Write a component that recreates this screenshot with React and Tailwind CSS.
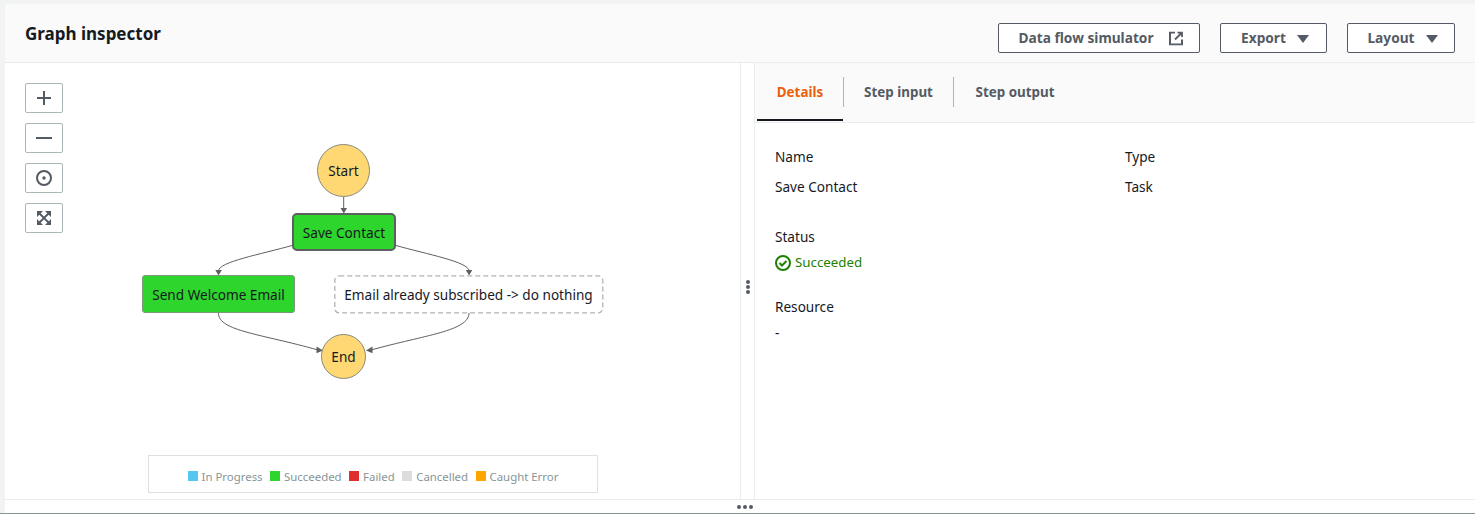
const font = 'font-["Noto_Sans",sans-serif]';

function ToolButton({ children }) {
  return (
    <button className="flex h-[30px] w-[38px] items-center justify-center rounded-[2px] border border-[#aab7b8] bg-white text-[#545b64]">
      {children}
    </button>
  );
}

function HeaderButton({ label, width, children }) {
  return (
    <button className={`flex h-[30px] ${width} items-center justify-center rounded-[2px] border border-[#545b64] bg-white pl-[3px] pt-[1px] text-[13.7px] font-bold text-[#545b64]`}>
      {label}
      {children}
    </button>
  );
}

function Caret() {
  return (
    <svg width="12" height="8" viewBox="0 0 12 8" className="ml-[11px]">
      <path d="M0 0h12L6 8z" fill="#545b64" />
    </svg>
  );
}

function Tab({ label, active, width }) {
  return (
    <div className={`relative flex h-full ${width} items-center justify-center text-[13.400px] font-bold ${active ? 'text-[#ec5f0b]' : 'text-[#545b64]'}`}>
      {label}
      {active && <div className="absolute bottom-[1px] left-0 right-0 h-[2px] bg-[#16191f]" />}
    </div>
  );
}

function Field({ label, value }) {
  return (
    <div className="flex flex-col gap-[11px]">
      <div>{label}</div>
      <div>{value}</div>
    </div>
  );
}

function Legend({ color, label }) {
  return (
    <div className="flex items-center gap-[4px]">
      <span className={`h-[10px] w-[10px] -translate-y-[1px] ${color}`} />
      <span>{label}</span>
    </div>
  );
}

function Graph() {
  return (
    <div className="relative flex-1">
      <svg className="absolute left-0 top-0" width="735" height="436" viewBox="5 63 735 436" fill="none">
        <g stroke="#5f5f5f" strokeWidth="1">
          <path d="M343.7 196.5V209" />
          <path d="M292 245.5C262 254 218 262 218.5 271" />
          <path d="M396 245.5C426 254 469.500 262 469 271" />
          <path d="M218.500 313C218 331 262 334 318 350" />
          <path d="M469 313C469 331 425 335 371 350" />
        </g>
        <g fill="#5f5f5f">
          <path d="M340.500 208h6.500l-3.200 5.500z" />
          <path d="M215.300 270h6.500l-3.200 5.500z" />
          <path d="M465.800 270h6.500l-3.200 5.500z" />
          <path d="M316.500 346.500l6.500 4-6.500 2.800z" />
          <path d="M372.500 346.500l-6.500 4 6.500 2.800z" />
        </g>
        <rect x="334.800" y="275.800" width="268" height="37" rx="4.500" fill="#fff" stroke="#b3b3b3" strokeWidth="1.300" strokeDasharray="5 3" />
      </svg>
      <div className="absolute left-[312px] top-[81px] flex h-[53px] w-[53px] items-center justify-center rounded-full border border-[#8a8a7a] bg-[#ffd873] pt-[1px] text-[13.600px] text-[#16191f]">Start</div>
      <div className="absolute left-[287px] top-[150px] flex h-[38px] w-[104px] items-center justify-center rounded-[5px] border-2 border-[#5f5f5f] bg-[#2dd52d] pt-[2px] text-[13.600px] text-[#16191f]">Save Contact</div>
      <div className="absolute left-[137px] top-[212px] flex h-[38px] w-[153px] items-center justify-center rounded-[3px] border border-[#7a9a7a] bg-[#2dd52d] pt-[2px] text-[13.600px] text-[#16191f]">Send Welcome Email</div>
      <div className="absolute left-[329px] top-[212px] flex h-[38px] w-[269px] items-center justify-center pt-[2px] text-[13.600px] text-[#16191f]">Email already subscribed -&gt; do nothing</div>
      <div className="absolute left-[316px] top-[271px] flex h-[45px] w-[45px] items-center justify-center rounded-full border border-[#8a8a7a] bg-[#ffd873] pt-[1px] text-[13.600px] text-[#16191f]">End</div>

      <div className="absolute left-[20px] top-[20px] flex flex-col gap-[10px]">
        <ToolButton>
          <svg width="16" height="16" viewBox="0 0 16 16" stroke="currentColor" strokeWidth="2"><path d="M8 1v14M1 8h14" /></svg>
        </ToolButton>
        <ToolButton>
          <svg width="16" height="16" viewBox="0 0 16 16" stroke="currentColor" strokeWidth="2"><path d="M0 8h16" /></svg>
        </ToolButton>
        <ToolButton>
          <svg width="16" height="16" viewBox="0 0 16 16" fill="none"><circle cx="8" cy="8" r="7" stroke="currentColor" strokeWidth="2" /><circle cx="8" cy="8" r="1.700" fill="currentColor" /></svg>
        </ToolButton>
        <ToolButton>
          <svg width="14" height="14" viewBox="0 0 14 14" fill="currentColor">
            <path d="M0 0h6L0 6zM14 0v6L8 0zM0 14V8l6 6zM14 14H8l6-6z" />
            <path d="M2 2l10 10M12 2L2 12" stroke="currentColor" strokeWidth="1.800" />
          </svg>
        </ToolButton>
      </div>

      <div className="absolute bottom-[6px] left-[143px] flex h-[38px] w-[450px] items-center justify-center gap-[7.500px] border border-[#dfe1e1] bg-white pt-[6px] text-[11.400px] text-[#879596]">
        <Legend color="bg-[#55c7ee]" label="In Progress" />
        <Legend color="bg-[#2dd52d]" label="Succeeded" />
        <Legend color="bg-[#e02f2f]" label="Failed" />
        <Legend color="bg-[#dddddd]" label="Cancelled" />
        <Legend color="bg-[#ffa500]" label="Caught Error" />
      </div>
    </div>
  );
}

export default function App() {
  return (
    <div className={`flex h-[514px] flex-col border-b border-[#879596] bg-[#f2f3f3] pl-[5px] pt-[4px] ${font}`}>
      <div className="flex min-h-0 flex-1 flex-col bg-white">
        <div className="flex h-[59px] shrink-0 items-start justify-between border-b border-[#eaeded] bg-[#fafafa] pl-[20px] pr-[20px]">
          <h2 className="mt-[17px] text-[17px] font-bold leading-[26px] text-[#16191f]">Graph inspector</h2>
          <div className="mt-[19px] flex gap-[20px]">
            <HeaderButton label="Data flow simulator" width="w-[202px]">
              <svg width="14" height="14" viewBox="0 0 14 14" fill="none" stroke="currentColor" strokeWidth="2" className="ml-[15px] -translate-y-[0.500px]">
                <path d="M6 1H1v12h12V8" />
                <path d="M6 8l6.500-6.500M8.500 1H13v4.500" strokeWidth="1.800" />
              </svg>
            </HeaderButton>
            <HeaderButton label="Export" width="w-[107px]"><Caret /></HeaderButton>
            <HeaderButton label="Layout" width="w-[108px]"><Caret /></HeaderButton>
          </div>
        </div>

        <div className="flex min-h-0 flex-1">
          <Graph />
          <div className="relative flex w-[15px] shrink-0 items-center justify-center border-x border-[#eaeded] bg-white">
            <div className="mt-[12px] flex flex-col gap-[1px]">
              <span className="h-[4px] w-[4px] rounded-full bg-[#545b64]" />
              <span className="h-[4px] w-[4px] rounded-full bg-[#545b64]" />
              <span className="h-[4px] w-[4px] rounded-full bg-[#545b64]" />
            </div>
          </div>
          <div className="flex w-[720px] shrink-0 flex-col">
            <div className="flex h-[60px] shrink-0 items-stretch border-b border-[#eaeded] bg-[#fafafa] pl-[2px]">
              <Tab label="Details" active width="w-[86px]" />
              <div className="mt-[14px] h-[30px] w-px bg-[#aab7b8]" />
              <Tab label="Step input" width="w-[109px]" />
              <div className="mt-[14px] h-[30px] w-px bg-[#aab7b8]" />
              <Tab label="Step output" width="w-[122px]" />
            </div>
            <div className="grid grid-cols-[350px_1fr] pl-[20px] pt-[24px] text-[13.600px] leading-[19px] text-[#16191f]">
              <Field label="Name" value="Save Contact" />
              <Field label="Type" value="Task" />
              <div className="col-span-2 mt-[31px] flex flex-col gap-[7px]">
                <div>Status</div>
                <div className="flex items-center gap-[4px] text-[13.300px] text-[#1d8102]">
                  <svg width="16" height="16" viewBox="0 0 16 16" fill="none" stroke="currentColor" strokeWidth="2">
                    <circle cx="8" cy="8" r="7" />
                    <path d="M4.500 8l2.500 2.500 4.500-4.500" />
                  </svg>
                  Succeeded
                </div>
              </div>
              <div className="col-span-2 mt-[25px] flex flex-col gap-[7px]">
                <div>Resource</div>
                <div>-</div>
              </div>
            </div>
          </div>
        </div>

        <div className="flex h-[14px] shrink-0 items-center justify-center gap-[2px] border-t border-[#eaeded] bg-white pl-[10px]">
          <span className="h-[4px] w-[4px] rounded-full bg-[#545b64]" />
          <span className="h-[4px] w-[4px] rounded-full bg-[#545b64]" />
          <span className="h-[4px] w-[4px] rounded-full bg-[#545b64]" />
        </div>
      </div>
    </div>
  );
}
